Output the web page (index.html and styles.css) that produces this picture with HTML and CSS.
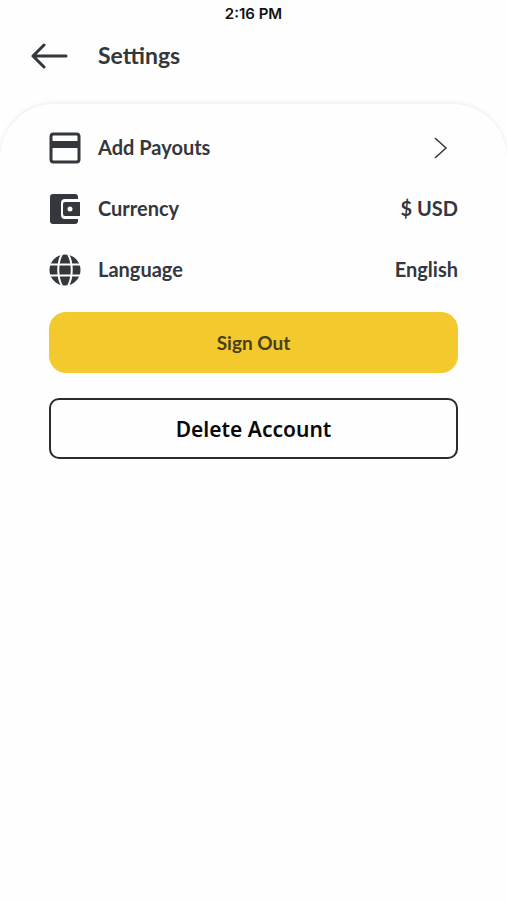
FILE: index.html
```
<!DOCTYPE html>
<html lang="en">
<head>
    <meta charset="UTF-8">
    <meta name="viewport" content="width=device-width, initial-scale=1.0">
    <title>Settings</title>
    <link rel="stylesheet" href="styles.css">
</head>
<body>
    <div class="status-bar">2:16 PM</div>

    <header class="header">
        <button class="back" type="button" aria-label="Back">
            <svg width="38" height="26" viewBox="0 0 38 26" fill="none" stroke="currentColor" stroke-width="3" stroke-linecap="round" stroke-linejoin="round">
                <path d="M35 13H2M13 2L2 13l11 11"/>
            </svg>
        </button>
        <h1>Settings</h1>
    </header>

    <main class="card">
        <nav class="menu">
            <a class="row" href="#payouts">
                <svg class="icon" viewBox="0 0 32 32">
                    <rect x="2" y="2" width="28" height="28" rx="2.500" fill="none" stroke="currentColor" stroke-width="3"/>
                    <rect x="2" y="9" width="28" height="7" fill="currentColor"/>
                </svg>
                <span class="label">Add Payouts</span>
                <svg class="chevron" width="14" height="22" viewBox="0 0 14 22" fill="none" stroke="currentColor" stroke-width="1.500">
                    <path d="M1 1l11 10L1 21"/>
                </svg>
            </a>
            <a class="row" href="#currency">
                <svg class="icon" viewBox="0 0 32 32" fill="currentColor">
                    <path d="M4 1h22a3 3 0 0 1 3 3v2H16a4 4 0 0 0-4 4v12a4 4 0 0 0 4 4h13v2a3 3 0 0 1-3 3H4a3 3 0 0 1-3-3V4a3 3 0 0 1 3-3z"/>
                    <path fill-rule="evenodd" d="M16 9h15v14H16a2 2 0 0 1-2-2V11a2 2 0 0 1 2-2zm5 4.500a2.500 2.500 0 1 0 0 5a2.500 2.500 0 1 0 0-5z"/>
                </svg>
                <span class="label">Currency</span>
                <span class="value">$ USD</span>
            </a>
            <a class="row" href="#language">
                <svg class="icon" viewBox="0 0 32 32">
                    <circle cx="16" cy="16" r="15.500" fill="currentColor"/>
                    <g fill="none" stroke="#fefefe" stroke-width="2">
                        <path d="M0 10.500h32M0 21.500h32"/>
                        <path d="M13 0C8 9 8 23 13 32M19 0c5 9 5 23 0 32"/>
                    </g>
                </svg>
                <span class="label">Language</span>
                <span class="value">English</span>
            </a>
        </nav>

        <button class="btn sign-out" type="button">Sign Out</button>
        <button class="btn delete" type="button">Delete Account</button>
    </main>
</body>
</html>
```

FILE: styles.css
```
* {
    box-sizing: border-box;
}
body {
    margin: 0;
    min-height: 100vh;
    display: flex;
    flex-direction: column;
    background: #fefefe;
    color: #34373c;
    font-family: Lato, sans-serif;
    font-weight: 700;
    overflow-x: hidden;
}
.status-bar {
    height: 28px;
    line-height: 28px;
    text-align: center;
    font-family: Inter, sans-serif;
    font-size: 15px;
    font-weight: 600;
    color: #111;
}
.header {
    display: flex;
    align-items: center;
    gap: 29px;
    height: 56px;
    padding: 0 31px;
}
.header h1 {
    margin: 0;
    padding-bottom: 2px;
    font-size: 23px;
}
.back {
    display: flex;
    padding: 0;
    border: none;
    background: none;
    color: inherit;
    cursor: pointer;
}
.card {
    flex: 1;
    margin-top: 20px;
    padding: 13px 49px 40px;
    border-radius: 54px 54px 0 0;
    background: #fefefe;
    box-shadow: 0 -1px 4px rgba(0, 0, 0, 0.08);
}
.row {
    display: flex;
    align-items: center;
    height: 61px;
    color: inherit;
    font-size: 20px;
    text-decoration: none;
}
.icon {
    width: 32px;
    height: 32px;
    margin-right: 17px;
}
.label,
.value {
    padding-bottom: 2px;
}
.label {
    flex: 1;
}
.chevron {
    margin-right: 10px;
}
.btn {
    display: block;
    width: 100%;
    height: 61px;
    border: none;
    cursor: pointer;
}
.sign-out {
    margin-top: 12px;
    border-radius: 17px;
    background: #f4c92d;
    color: #46401f;
    font-family: Lato, sans-serif;
    font-size: 19px;
    font-weight: 700;
}
.delete {
    margin-top: 25px;
    border: 2px solid #2b2b2d;
    border-radius: 10px;
    background: #fefefe;
    color: #0a0a0a;
    font-family: "Noto Sans", sans-serif;
    font-size: 21px;
    font-weight: 600;
}
```
